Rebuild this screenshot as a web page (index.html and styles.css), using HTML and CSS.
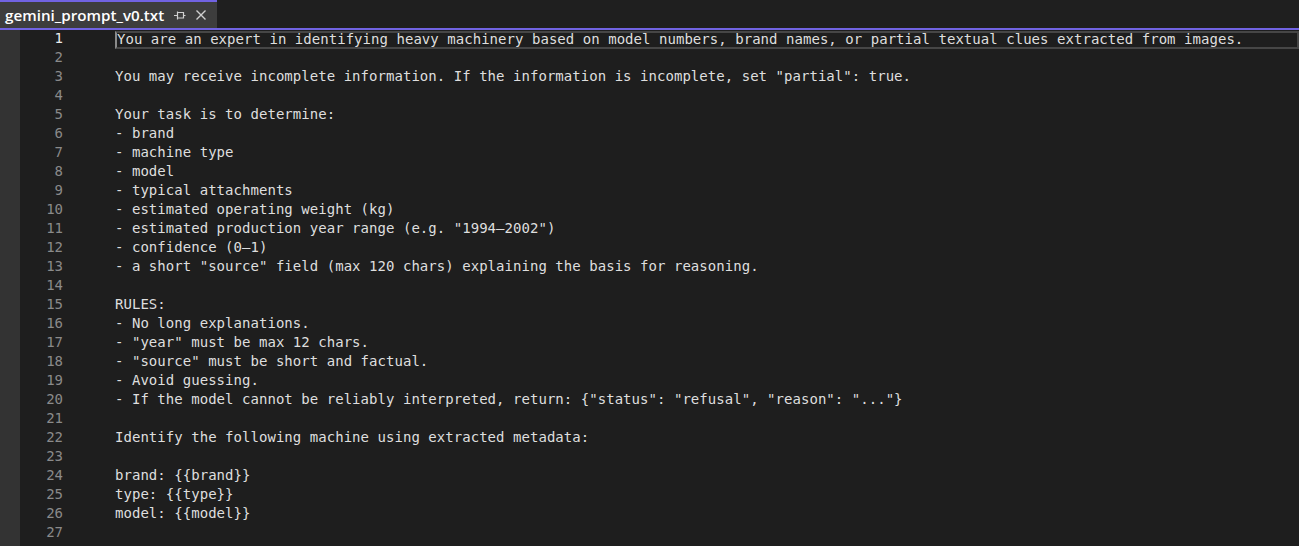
FILE: index.html
```html
<!DOCTYPE html>
<html>
<head>
<meta charset="utf-8">
<link rel="stylesheet" href="styles.css">
</head>
<body>
<div class="tabbar">
  <div class="tab">
    <span class="tab-title">gemini_prompt_v0.txt</span>
    <svg class="pin" width="13" height="12" viewBox="0 0 13 12"><path d="M1 6.5H4.5M4.5 2.5V10.5M4.5 3.5H10.5V9H4.5M10.5 6.5H12.5" stroke="#d0d0d0" stroke-width="1.2" fill="none"/></svg>
    <svg class="close" width="12" height="12" viewBox="0 0 12 12"><path d="M1.5 1.5L10.5 10.5M10.5 1.5L1.5 10.5" stroke="#d0d0d0" stroke-width="1.4" fill="none"/></svg>
  </div>
</div>
<div class="editor">
  <div class="margin"></div>
  <div class="gutter">
    <div class="ln current">1</div><div class="ln">2</div><div class="ln">3</div><div class="ln">4</div><div class="ln">5</div><div class="ln">6</div><div class="ln">7</div><div class="ln">8</div><div class="ln">9</div><div class="ln">10</div><div class="ln">11</div><div class="ln">12</div><div class="ln">13</div><div class="ln">14</div><div class="ln">15</div><div class="ln">16</div><div class="ln">17</div><div class="ln">18</div><div class="ln">19</div><div class="ln">20</div><div class="ln">21</div><div class="ln">22</div><div class="ln">23</div><div class="ln">24</div><div class="ln">25</div><div class="ln">26</div><div class="ln">27</div>
  </div>
  <div class="code">
    <div class="line current-line">You are an expert in identifying heavy machinery based on model numbers, brand names, or partial textual clues extracted from images.</div>
    <div class="line"></div>
    <div class="line">You may receive incomplete information. If the information is incomplete, set "partial": true.</div>
    <div class="line"></div>
    <div class="line">Your task is to determine:</div>
    <div class="line">- brand</div>
    <div class="line">- machine type</div>
    <div class="line">- model</div>
    <div class="line">- typical attachments</div>
    <div class="line">- estimated operating weight (kg)</div>
    <div class="line">- estimated production year range (e.g. "1994–2002")</div>
    <div class="line">- confidence (0–1)</div>
    <div class="line">- a short "source" field (max 120 chars) explaining the basis for reasoning.</div>
    <div class="line"></div>
    <div class="line">RULES:</div>
    <div class="line">- No long explanations.</div>
    <div class="line">- "year" must be max 12 chars.</div>
    <div class="line">- "source" must be short and factual.</div>
    <div class="line">- Avoid guessing.</div>
    <div class="line">- If the model cannot be reliably interpreted, return: {"status": "refusal", "reason": "..."}</div>
    <div class="line"></div>
    <div class="line">Identify the following machine using extracted metadata:</div>
    <div class="line"></div>
    <div class="line">brand: {{brand}}</div>
    <div class="line">type: {{type}}</div>
    <div class="line">model: {{model}}</div>
    <div class="line"></div>
  </div>
</div>
</body>
</html>
```
FILE: styles.css
```css
html, body {
  margin: 0;
  padding: 0;
  background: #1f1f1f;
  overflow: hidden;
}
.tabbar {
  height: 28px;
  border-bottom: 2px solid #7163e2;
  display: flex;
  background: #1f1f1f;
}
.tab {
  box-sizing: border-box;
  width: 217px;
  height: 28px;
  border-top: 2px solid #7163e2;
  background: #3d3d3d;
  display: flex;
  align-items: center;
  padding-left: 5px;
}
.tab-title {
  font-family: "Open Sans", "Noto Sans", sans-serif;
  font-weight: 600;
  font-size: 15.2px;
  color: #ffffff;
  width: 168px;
  white-space: nowrap;
}
.pin { margin-left: 0; }
.close { margin-left: 9px; }
.editor {
  display: flex;
  background: #1e1e1e;
  height: 520px;
}
.margin {
  width: 20px;
  background: #333333;
}
.gutter {
  width: 43px;
  font-family: "DejaVu Sans Mono", monospace;
  font-size: 14px;
}
.ln {
  height: 17px;
  line-height: 17px;
  padding-bottom: 2px;
  text-align: right;
  color: #8a8a8a;
}
.ln.current { color: #ececec; }
.code {
  flex: 1;
  margin-left: 52px;
  font-family: "DejaVu Sans Mono", monospace;
  font-size: 14px;
  letter-spacing: 0.04px;
  color: #dedede;
}
.line {
  height: 17px;
  line-height: 17px;
  padding-bottom: 2px;
  white-space: pre;
}
.current-line {
  box-sizing: border-box;
  border: 2px solid #464646;
  border-left: 2px solid #8a8a8a;
  line-height: 12px;
  margin-top: 1px;
  height: 18px;
  padding-bottom: 2px;
}
```
